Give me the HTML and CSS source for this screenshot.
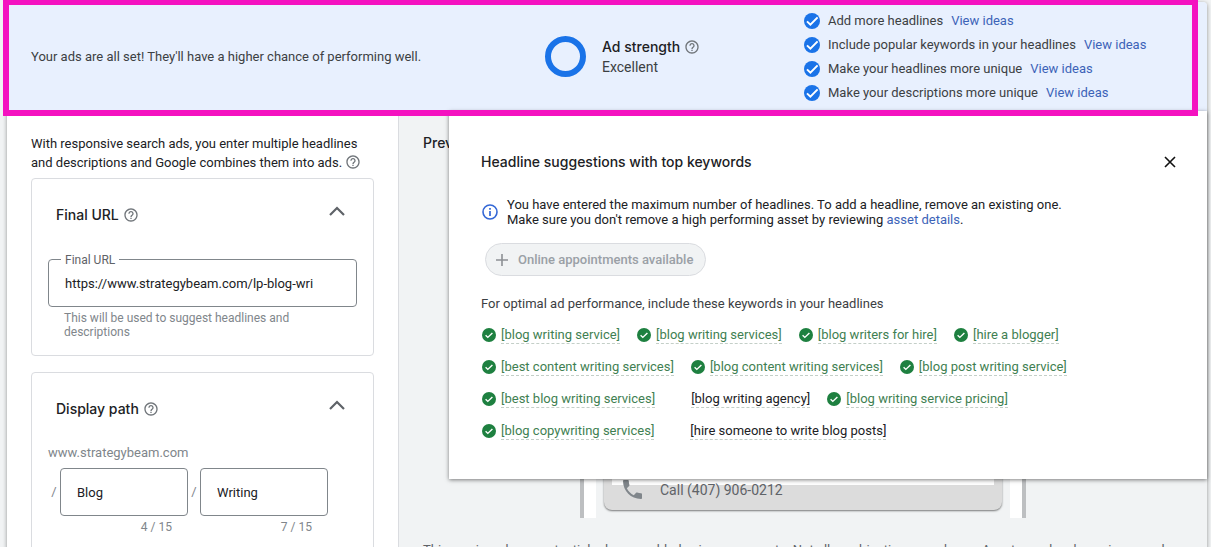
FILE: index.html
```html
<!DOCTYPE html>
<html lang="en">
<head>
    <meta charset="UTF-8">
    <meta name="viewport" content="width=device-width, initial-scale=1.0">
    <title>Responsive search ad</title>
    <link rel="stylesheet" href="styles.css">
</head>
<body>
    <!-- Shared icons -->
    <svg class="sprite" aria-hidden="true">
        <symbol id="help" viewBox="0 0 24 24">
            <path d="M11 18h2v-2h-2v2zm1-16C6.48 2 2 6.48 2 12s4.48 10 10 10 10-4.48 10-10S17.52 2 12 2zm0 18c-4.41 0-8-3.59-8-8s3.59-8 8-8 8 3.59 8 8-3.59 8-8 8zm0-14c-2.21 0-4 1.79-4 4h2c0-1.1.9-2 2-2s2 .9 2 2c0 2-3 1.75-3 5h2c0-2.25 3-2.5 3-5 0-2.21-1.79-4-4-4z"/>
        </symbol>
        <symbol id="check" viewBox="0 0 16 16">
            <circle cx="8" cy="8" r="8" fill="#1a73e8"/>
            <path d="M3 8.4l3.4 3.3 7.2-7.3" fill="none" stroke="#fff" stroke-width="2"/>
        </symbol>
        <symbol id="used" viewBox="0 0 14 14">
            <circle cx="7" cy="7" r="7" fill="#1e8040"/>
            <path d="M3.6 7.3l2.2 2.1 4.6-4.5" fill="none" stroke="#fff" stroke-width="1.4"/>
        </symbol>
        <symbol id="chevron" viewBox="0 0 16 10">
            <path d="M1 9l7-7 7 7" fill="none" stroke="#5f6368" stroke-width="2.2"/>
        </symbol>
    </svg>

    <div class="editor">
        <div class="banner">
            <p class="banner-message">Your ads are all set! They'll have a higher chance of performing well.</p>
            <div class="strength">
                <div class="strength-ring"></div>
                <div>
                    <div class="strength-title">Ad strength <svg class="help"><use href="#help"/></svg></div>
                    <div class="strength-value">Excellent</div>
                </div>
            </div>
            <ul class="checklist">
                <li><svg class="check"><use href="#check"/></svg>Add more headlines <a href="#">View ideas</a></li>
                <li><svg class="check"><use href="#check"/></svg>Include popular keywords in your headlines <a href="#">View ideas</a></li>
                <li><svg class="check"><use href="#check"/></svg>Make your headlines more unique <a href="#">View ideas</a></li>
                <li><svg class="check"><use href="#check"/></svg>Make your descriptions more unique <a href="#">View ideas</a></li>
            </ul>
        </div>

        <div class="content">
            <div class="form-panel">
                <p class="intro">With responsive search ads, you enter multiple headlines and descriptions and Google combines them into ads. <svg class="help"><use href="#help"/></svg></p>

                <section class="card">
                    <div class="card-header">
                        <h2>Final URL <svg class="help"><use href="#help"/></svg></h2>
                        <button class="icon-btn" aria-label="Collapse final URL"><svg class="chevron"><use href="#chevron"/></svg></button>
                    </div>
                    <div class="url-field">
                        <label for="finalUrl">Final URL</label>
                        <input class="text-input" type="text" id="finalUrl" value="https://www.strategybeam.com/lp-blog-wri">
                    </div>
                    <p class="hint">This will be used to suggest headlines and descriptions</p>
                </section>

                <section class="card">
                    <div class="card-header">
                        <h2>Display path <svg class="help"><use href="#help"/></svg></h2>
                        <button class="icon-btn" aria-label="Collapse display path"><svg class="chevron"><use href="#chevron"/></svg></button>
                    </div>
                    <div class="domain">www.strategybeam.com</div>
                    <div class="paths">
                        <span class="slash">/</span>
                        <div class="path">
                            <input class="text-input" type="text" aria-label="Path 1" value="Blog">
                            <div class="counter">4 / 15</div>
                        </div>
                        <span class="slash">/</span>
                        <div class="path">
                            <input class="text-input" type="text" aria-label="Path 2" value="Writing">
                            <div class="counter">7 / 15</div>
                        </div>
                    </div>
                </section>
            </div>

            <div class="preview-panel">
                <h2>Preview</h2>
                <div class="phone">
                    <div class="phone-screen">
                        <div class="ad">
                            <div class="ad-body"></div>
                            <div class="call-row">
                                <svg class="phone-icon" viewBox="3 3 18 18"><path d="M6.62 10.79c1.44 2.83 3.76 5.14 6.59 6.59l2.2-2.2c.27-.27.67-.36 1.02-.24 1.12.37 2.33.57 3.57.57.55 0 1 .45 1 1V20c0 .55-.45 1-1 1-9.39 0-17-7.61-17-17 0-.55.45-1 1-1h3.5c.55 0 1 .45 1 1 0 1.25.2 2.45.57 3.57.11.35.03.74-.25 1.02l-2.2 2.2z"/></svg>
                                Call (407) 906-0212
                            </div>
                        </div>
                    </div>
                </div>
                <p class="disclaimer">This preview shows potential ads assembled using your assets. Not all combinations are shown. Assets can be shown in any order, so make sure they make sense individually or in combination.</p>
            </div>

            <div class="dialog" role="dialog" aria-labelledby="dialogTitle">
                <div class="dialog-header">
                    <h2 id="dialogTitle">Headline suggestions with top keywords</h2>
                    <button class="icon-btn" aria-label="Close"><svg class="close" viewBox="0 0 12 12"><path d="M1 1l10 10M11 1L1 11" stroke="#111" stroke-width="1.6"/></svg></button>
                </div>
                <div class="notice">
                    <svg class="info" viewBox="0 0 16 16"><circle cx="8" cy="8" r="7" fill="none" stroke="#3367d6" stroke-width="1.6"/><path d="M8 7v5M8 4v1.7" stroke="#3367d6" stroke-width="1.7"/></svg>
                    <p>You have entered the maximum number of headlines. To add a headline, remove an existing one.<br>
                    Make sure you don't remove a high performing asset by reviewing <a href="#">asset details</a>.</p>
                </div>
                <button class="suggestion" disabled><svg class="plus" viewBox="0 0 12 12"><path d="M6 0v12M0 6h12" stroke="#8d9094" stroke-width="1.6"/></svg>Online appointments available</button>
                <p class="keywords-title">For optimal ad performance, include these keywords in your headlines</p>
                <ul class="keywords">
                    <li><svg><use href="#used"/></svg><span>[blog writing service]</span></li>
                    <li><svg><use href="#used"/></svg><span>[blog writing services]</span></li>
                    <li><svg><use href="#used"/></svg><span>[blog writers for hire]</span></li>
                    <li><svg><use href="#used"/></svg><span>[hire a blogger]</span></li>
                    <li><svg><use href="#used"/></svg><span>[best content writing services]</span></li>
                    <li><svg><use href="#used"/></svg><span>[blog content writing services]</span></li>
                    <li><svg><use href="#used"/></svg><span>[blog post writing service]</span></li>
                    <li><svg><use href="#used"/></svg><span>[best blog writing services]</span></li>
                    <li class="unused"><span>[blog writing agency]</span></li>
                    <li><svg><use href="#used"/></svg><span>[blog writing service pricing]</span></li>
                    <li><svg><use href="#used"/></svg><span>[blog copywriting services]</span></li>
                    <li class="unused"><span>[hire someone to write blog posts]</span></li>
                </ul>
            </div>
        </div>
    </div>
    <div class="highlight"></div>
</body>
</html>
```
FILE: styles.css
```css
* {
    margin: 0;
    padding: 0;
    box-sizing: border-box;
}

body {
    font-family: Roboto, "Liberation Sans", sans-serif;
    font-size: 13px;
    line-height: 20px;
    color: #202124;
    background: #f1f3f4;
    padding: 2px 4px 0 7px;
    position: relative;
    height: 100vh;
    overflow: hidden;
}

h2,
.strength-title {
    font-family: Inter, Roboto, sans-serif;
    font-size: 14px;
    font-weight: 500;
    line-height: 20px;
}

a {
    color: #3c63b8;
    text-decoration: none;
}

ul {
    list-style: none;
}

button {
    font: inherit;
    border: none;
    background: none;
}

.sprite {
    display: none;
}

.help {
    width: 16px;
    height: 16px;
    fill: #70757a;
    vertical-align: -3px;
}

.editor {
    border-radius: 4px 4px 0 0;
    box-shadow: 0 1px 4px rgba(0, 0, 0, 0.4);
}

/* Ad strength banner */
.banner {
    display: grid;
    grid-template-columns: 514fr 259fr 403fr;
    align-items: center;
    height: 109px;
    padding-left: 24px;
    background: #e8f0fe;
    border-radius: 4px 4px 0 0;
    color: #3c4043;
}

.strength {
    display: flex;
    align-items: center;
    gap: 16px;
}

.strength-ring {
    width: 41px;
    height: 41px;
    border: 6px solid #1a73e8;
    border-radius: 50%;
}

.strength-title {
    color: #202124;
}

.strength-value {
    font-size: 14px;
}

.checklist li {
    display: flex;
    align-items: center;
    height: 24px;
}

.checklist a {
    margin-left: 8px;
}

.check {
    width: 16px;
    height: 16px;
    margin-right: 8px;
}

/* Box drawn round the banner */
.highlight {
    position: absolute;
    top: -1px;
    left: 3px;
    right: 13px;
    height: 117px;
    border: 6px solid #f412c0;
}

.content {
    display: flex;
    position: relative;
}

/* Form */
.form-panel {
    flex: 0 0 392px;
    padding: 23px 24px;
    background: #fff;
    border-right: 1px solid #dadce0;
}

.intro {
    line-height: 19px;
    margin-bottom: 6px;
}

.card {
    border: 1px solid #dadce0;
    border-radius: 4px;
    padding: 16px;
    margin-bottom: 16px;
}

.card-header {
    display: flex;
    justify-content: space-between;
    align-items: center;
    height: 40px;
    padding: 0 8px;
}

.icon-btn {
    display: flex;
    align-items: center;
    justify-content: center;
    width: 40px;
    height: 32px;
    cursor: pointer;
}

.card-header .icon-btn {
    margin-right: -8px;
    align-self: flex-start;
}

.chevron {
    width: 16px;
    height: 10px;
}

.text-input {
    display: block;
    width: 100%;
    height: 48px;
    padding: 0 16px;
    border: 1px solid #80868b;
    border-radius: 4px;
    font: inherit;
    color: #202124;
    background: #fff;
}

.url-field {
    position: relative;
    margin-top: 24px;
}

.url-field label {
    position: absolute;
    top: -8px;
    left: 13px;
    padding: 0 4px;
    background: #fff;
    font-size: 12px;
    line-height: 18px;
    color: #5f6368;
}

.hint {
    margin: 4px 16px 0;
    font-size: 12px;
    line-height: 14px;
    color: #80868b;
}

.domain {
    margin-top: 14px;
    color: #80868b;
}

.paths {
    display: flex;
    margin-top: 5px;
}

.slash {
    width: 12px;
    line-height: 48px;
    text-align: center;
    color: #80868b;
}

.path {
    width: 128px;
}

.counter {
    padding: 1px 16px 0 0;
    font-size: 12px;
    text-align: right;
    color: #80868b;
}

/* Preview */
.preview-panel {
    flex: 1;
    padding: 22px 24px;
    background: #f1f3f4;
}

.phone {
    width: 446px;
    margin: 0 auto;
    border: solid #bdbfc1;
    border-width: 0 4px;
}

.phone-screen {
    height: 365px;
    padding: 0 8px 8px;
    border: solid #fff;
    border-width: 0 12px;
}

.ad {
    display: flex;
    flex-direction: column;
    height: 100%;
    background: #dcdcdc;
    border-radius: 8px;
    box-shadow: 0 1px 2px rgba(0, 0, 0, 0.5);
}

.ad-body {
    flex: 1;
    margin: 0 8px;
    background: #fff;
}

.call-row {
    display: flex;
    align-items: center;
    gap: 18px;
    height: 25px;
    padding: 0 19px 16px;
    font-size: 14px;
    color: #5f6368;
}

.phone-icon {
    width: 19px;
    height: 19px;
    fill: #80868b;
}

.disclaimer {
    margin-top: 22px;
    color: #5f6368;
}

/* Headline suggestions */
.dialog {
    position: absolute;
    top: 0;
    left: 442px;
    right: 0;
    padding: 31px 32px 32px;
    background: #fff;
    box-shadow: 0 1px 4px rgba(0, 0, 0, 0.5);
}

.dialog-header {
    display: flex;
    justify-content: space-between;
    align-items: center;
    height: 40px;
}

.dialog-header .icon-btn {
    margin-right: -15px;
}

.close {
    width: 12px;
    height: 12px;
}

.notice {
    display: flex;
    align-items: center;
    gap: 9px;
    margin-top: 15px;
    line-height: 15px;
}

.info {
    width: 16px;
    height: 16px;
    margin-left: 1px;
}

.suggestion {
    display: flex;
    align-items: center;
    gap: 10px;
    height: 33px;
    margin: 16px 4px 18px;
    padding: 0 12px 0 10px;
    border: 1px solid #dadce0;
    border-radius: 17px;
    background: #f1f3f4;
    font-weight: 500;
    color: #9aa0a6;
}

.plus {
    width: 12px;
    height: 12px;
}

.keywords-title {
    color: #3c4043;
}

.keywords {
    display: flex;
    flex-wrap: wrap;
    column-gap: 17px;
    margin-top: 5px;
    padding-left: 1px;
}

.keywords li {
    display: flex;
    align-items: center;
    gap: 5px;
    height: 32px;
    color: #3f7f52;
}

.keywords svg {
    width: 14px;
    height: 14px;
}

.keywords span {
    line-height: 16px;
    border-bottom: 1px dashed #c4cfc8;
}

.keywords .unused {
    padding-left: 19px;
    color: #202124;
}
```
